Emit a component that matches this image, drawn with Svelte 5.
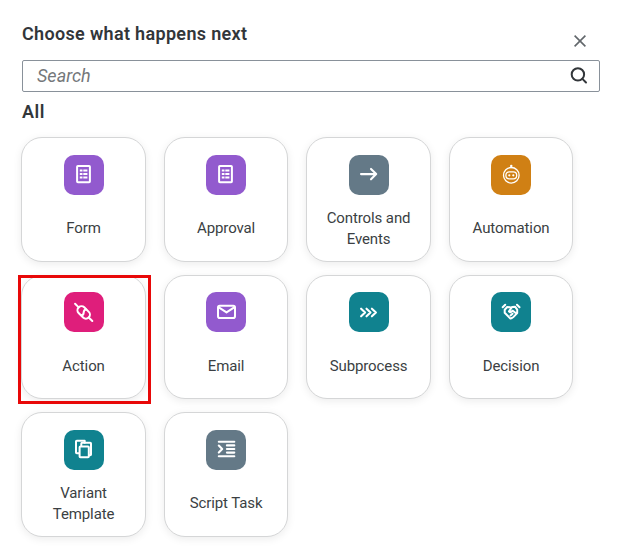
<script>
  const steps = [
    { label: 'Form', icon: 'form', tone: 'purple' },
    { label: 'Approval', icon: 'form', tone: 'purple' },
    { label: 'Controls and Events', icon: 'arrow', tone: 'slate' },
    { label: 'Automation', icon: 'robot', tone: 'orange' },
    { label: 'Action', icon: 'plug', tone: 'pink', highlighted: true },
    { label: 'Email', icon: 'mail', tone: 'purple' },
    { label: 'Subprocess', icon: 'chevrons', tone: 'teal' },
    { label: 'Decision', icon: 'handshake', tone: 'teal' },
    { label: 'Variant Template', icon: 'copy', tone: 'teal' },
    { label: 'Script Task', icon: 'script', tone: 'slate' }
  ];
</script>

<main class="dialog">
  <header class="header">
    <h1>Choose what happens next</h1>
    <button class="close" aria-label="Close">
      <svg width="14" height="14" viewBox="0 0 14 14"><path d="M1.6 1.6 12.4 12.4M12.4 1.6 1.6 12.4" /></svg>
    </button>
  </header>

  <div class="search">
    <input type="text" placeholder="Search" aria-label="Search" />
    <svg width="18" height="18" viewBox="0 0 18 18"><circle cx="7.9" cy="7.4" r="6.2" /><path d="m12.4 11.9 3.6 3.6" /></svg>
  </div>

  <h2>All</h2>

  <section class="grid">
    {#each steps as step}
      <div class="card" class:highlighted={step.highlighted}>
        <span class="tile {step.tone}">
          <svg width="20" height="20" viewBox="0 0 20 20">
            {#if step.icon === 'form'}
              <rect x="3.1" y=".9" width="12.8" height="16.3" rx=".8" />
              <path class="thin" d="M5.8 5.4h2.7M5.8 9h2.7M5.8 12.6h2.7M9.3 5.4h4.1M9.3 9h4.1M9.3 12.6h4.1" />
            {:else if step.icon === 'arrow'}
              <path class="bold" d="M2 9.1h15M12 3.9l5.2 5.2-5.2 5.2" />
            {:else if step.icon === 'robot'}
              <g class="fine">
                <circle cx="10.3" cy="10.3" r="7.8" />
                <rect x="4.9" y="6.8" width="10.8" height="7" rx="3.4" />
                <path d="M10.3 2.5V1" />
              </g>
              <circle class="dot" cx="8.3" cy="10.3" r="1.1" />
              <circle class="dot" cx="12.3" cy="10.3" r="1.1" />
              <circle class="dot" cx="10.3" cy="1" r="1.2" />
            {:else if step.icon === 'plug'}
              <g transform="translate(9.7 10.4) rotate(45)">
                <rect class="link" x="-7.1" y="-4" width="14.2" height="8" rx="3.9" />
                <path class="link" d="M-12.2 0h5.1M7.1 0h5.1M-.3-3.8c-1.2 1.2-1 2.4.3 3.8s1.5 2.6.3 3.8" />
              </g>
            {:else if step.icon === 'mail'}
              <rect x="2" y="3.8" width="17" height="12.3" rx="1.8" />
              <path d="m2.8 5.3 7.7 5.1 7.7-5.1" />
            {:else if step.icon === 'chevrons'}
              <path class="bold" d="m2.1 6.7 4 3.8-4 3.8M7.5 6.7l4 3.8-4 3.8M12.9 6.7l4 3.8-4 3.8" />
            {:else if step.icon === 'handshake'}
              <path d="M1.7 5.3l2.5-2.5M16 2.8l2.5 2.5M9 5.3 6.2 5 3.7 7.7v3.1l5.7 5.8 1.6-.6M8 9.4l3.1-4.5 2.9-.2 2.2 3v3.4l-3.9 4M8 9.4l1.4.9 2.4-1.6 3.2 2.5M9.5 13.4l2-1.7" />
            {:else if step.icon === 'copy'}
              <path d="M5 13.2H2.8a.8.8 0 0 1-.8-.8V1.5c0-.4.4-.8.8-.8h7.9v2" />
              <path d="M7.3 5.7V3.6c0-.5.4-.9.9-.9h8c.4 0 .8.4.8.8v10.9c0 .5-.4.8-.8.8h-.7" />
              <rect x="5.6" y="6.4" width="9.2" height="10.9" rx=".8" />
            {:else}
              <path class="bold" d="M2.8 1.8h15.5M2.8 16.2h15.5M2.8 5.6l3.4 3.5-3.4 3.5M10.9 5.4h7.4M10.9 9h7.4M10.9 12.6h7.4" />
            {/if}
          </svg>
        </span>
        <span class="label">{step.label}</span>
      </div>
    {/each}
  </section>
</main>

<style>
  :global(body) { margin: 0; background: #fff; }
  .dialog {
    box-sizing: border-box;
    width: 622px;
    height: 560px;
    padding: 22px 22px 0;
    overflow: hidden;
    background: #fff;
    color: #32363a;
    font-family: Roboto, "Liberation Sans", sans-serif;
  }
  .header { display: flex; justify-content: space-between; height: 38px; }
  h1, h2 { margin: 0; font-size: 18px; line-height: 24px; font-weight: 600; }
  h1 { letter-spacing: .33px; }
  .close {
    display: flex;
    width: 14px;
    height: 14px;
    margin: 12px 13px 0 0;
    padding: 0;
    border: 0;
    background: none;
  }
  .close svg { fill: none; stroke: #62676b; stroke-width: 1.6; }
  .search {
    box-sizing: border-box;
    display: flex;
    align-items: center;
    height: 32px;
    padding: 0 11px 0 14px;
    border: 1px solid #89919a;
    border-radius: 2px;
  }
  .search input {
    flex: 1;
    min-width: 0;
    padding: 0;
    border: 0;
    outline: 0;
    background: none;
    color: #32363a;
    font: 18px/24px Roboto, "Liberation Sans", sans-serif;
  }
  .search input::placeholder { color: #74777a; font-style: italic; opacity: 1; }
  .search svg { flex: none; fill: none; stroke: #32363a; stroke-width: 2; stroke-linecap: round; }
  h2 { margin-top: 8px; letter-spacing: .5px; }
  .grid {
    display: grid;
    grid-template-columns: repeat(4, 124.5px);
    grid-auto-rows: 124.5px;
    gap: 13.1px 18px;
    margin: 13.2px 0 0 -.7px;
  }
  .card {
    position: relative;
    box-sizing: border-box;
    display: flex;
    flex-direction: column;
    align-items: center;
    gap: 13px;
    padding-top: 16.4px;
    border: 1px solid #d5d6d7;
    border-radius: 21px;
    background: #fff;
    box-shadow: 0 2px 8px rgba(0, 0, 0, .08);
  }
  .highlighted::after {
    content: "";
    position: absolute;
    inset: -1px -6px -6px -4px;
    border: 3px solid #e80808;
  }
  .tile {
    display: grid;
    place-items: center;
    flex: none;
    width: 40px;
    height: 40px;
    border-radius: 10px;
  }
  .purple { background: #925ace; }
  .slate { background: #647987; }
  .orange { background: #d08014; }
  .pink { background: #df1e7b; }
  .teal { background: #10828f; }
  .tile svg {
    fill: none;
    stroke: #fff;
    stroke-width: 2;
    stroke-linecap: round;
    stroke-linejoin: round;
    overflow: visible;
  }
  .tile .thin { stroke-width: 2; stroke-linecap: butt; }
  .tile .fine { stroke-width: 1.3; }
  .tile .link { stroke-width: 2; }
  .tile .bold { stroke-width: 2.1; }
  .tile .dot { fill: #fff; stroke: none; }
  .label {
    display: flex;
    align-items: center;
    justify-content: center;
    width: 94px;
    height: 42px;
    color: #3b3f43;
    font-size: 15px;
    line-height: 21px;
    letter-spacing: -.1px;
    text-align: center;
  }
</style>
